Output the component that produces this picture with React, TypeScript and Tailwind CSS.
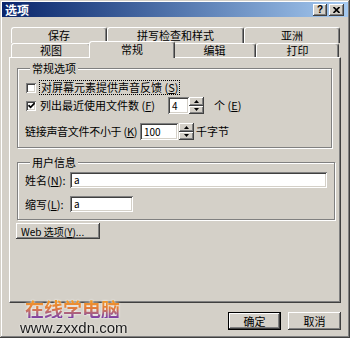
import React from 'react';

const raised =
  'shadow-[inset_-1px_-1px_#404040,inset_1px_1px_#fff,inset_-2px_-2px_#808080,inset_2px_2px_#d4d0c8]';
const sunken =
  'shadow-[inset_1px_1px_#808080,inset_-1px_-1px_#fff,inset_2px_2px_#404040,inset_-2px_-2px_#d4d0c8]';

const Check: React.FC<{ checked?: boolean }> = ({ checked }) => (
  <span
    className={`w-[10px] h-[10px] bg-white flex items-center justify-center shrink-0 ${sunken}`}
  >
    {checked && (
      <svg width="7" height="7" viewBox="0 0 7 7">
        <path d="M0.5 3.2 L2.6 5.3 L6.6 1.2" stroke="#000" strokeWidth="1.7" fill="none" />
      </svg>
    )}
  </span>
);

const Spin: React.FC = () => (
  <div className="flex flex-col w-[15px] h-[17px] shrink-0">
    <div className={`flex-1 bg-[#d4d0c8] flex items-center justify-center ${raised}`}>
      <svg width="5" height="3" viewBox="0 0 5 3">
        <path d="M0 3 L2.5 0 L5 3 Z" fill="#000" />
      </svg>
    </div>
    <div className={`flex-1 bg-[#d4d0c8] flex items-center justify-center ${raised}`}>
      <svg width="5" height="3" viewBox="0 0 5 3">
        <path d="M0 0 L5 0 L2.5 3 Z" fill="#000" />
      </svg>
    </div>
  </div>
);

const BackTab: React.FC<{ label: string; w: string }> = ({ label, w }) => (
  <div
    className={`${w} h-[16px] border-t border-l border-white border-r border-r-[#404040] rounded-t-[3px] shadow-[inset_-1px_0_#808080] flex items-center justify-center`}
  >
    {label}
  </div>
);

const FrontTab: React.FC<{ label: string; w: string }> = ({ label, w }) => (
  <div
    className={`${w} h-[14px] border-t border-l border-white border-r border-r-[#404040] rounded-t-[3px] shadow-[inset_-1px_0_#808080] flex items-center justify-center bg-[#d4d0c8]`}
  >
    {label}
  </div>
);

const Field: React.FC<{ value: string; w: string; h?: string }> = ({ value, w, h = 'h-[17px]' }) => (
  <div className={`${w} ${h} bg-white ${sunken} flex items-center pl-[4px] text-[10px] leading-none shrink-0`}>
    {value}
  </div>
);

const App: React.FC = () => {
  return (
    <div
      className={`relative w-[350px] h-[338px] bg-[#d4d0c8] text-black text-[11px] leading-[13px] font-['Noto_Sans_CJK_SC','Liberation_Sans',sans-serif] overflow-hidden shadow-[inset_-1px_-1px_#404040,inset_1px_1px_#d4d0c8,inset_-2px_-2px_#808080,inset_2px_2px_#fff]`}
    >
      {/* title bar */}
      <div className="mx-[2px] mt-[2px] h-[15px] bg-gradient-to-r from-[#0a246a] to-[#a6caf0] flex items-center justify-between pl-[3px] pr-[4px]">
        <span className="text-white font-bold text-[12px] leading-[15px]">选项</span>
        <div className="flex gap-[2px]">
          <div className={`w-[14px] h-[12px] bg-[#d4d0c8] ${raised} flex items-center justify-center text-[10px] font-bold leading-none font-['Liberation_Sans',sans-serif]`}>
            ?
          </div>
          <div className={`w-[15px] h-[12px] bg-[#d4d0c8] ${raised} flex items-center justify-center`}>
            <svg width="7" height="6" viewBox="0 0 7 6">
              <path d="M0.5 0 L6.5 6 M6.5 0 L0.5 6" stroke="#000" strokeWidth="1.6" />
            </svg>
          </div>
        </div>
      </div>

      {/* tabs */}
      <div className="mt-[10px] ml-[11px] w-[329px]">
        <div className="flex">
          <BackTab label="保存" w="w-[96px]" />
          <BackTab label="拼写检查和样式" w="w-[137px]" />
          <BackTab label="亚洲" w="w-[96px]" />
        </div>
        <div className="flex items-end h-[14px]">
          <FrontTab label="视图" w="w-[80px]" />
          <div className="relative z-10 w-[86px] -mx-[2px] h-[17px] -mb-px pb-[2px] border-t border-l border-white border-r border-r-[#404040] rounded-t-[3px] shadow-[inset_-1px_0_#808080] flex items-center justify-center bg-[#d4d0c8]">
            常规
          </div>
          <FrontTab label="编辑" w="w-[83px]" />
          <FrontTab label="打印" w="w-[83px]" />
        </div>
      </div>

      {/* tab page */}
      <div className="mx-[9px] h-[246px] border-t border-l border-white border-r border-b border-r-[#404040] border-b-[#404040] shadow-[inset_-1px_-1px_#808080] pl-[7px] pr-[8px] pt-[4px]">
        <fieldset className="border border-[#808080] shadow-[inset_1px_1px_#fff,1px_1px_#fff] pt-[7px] pb-[7px] px-[7px]">
          <legend className="ml-[5px] px-[2px] leading-[12px] bg-[#d4d0c8]">常规选项</legend>

          <div className="flex items-center h-[13px] pl-[1px]">
            <Check />
            <span className="ml-[4px] outline outline-1 outline-dotted outline-black px-[1px] whitespace-nowrap">
              对屏幕元素提供声音反馈 (<u>S</u>)
            </span>
          </div>

          <div className="flex items-center h-[17px] mt-[3px] pl-[1px]">
            <Check checked />
            <span className="ml-[4px] w-[128px] shrink-0 whitespace-nowrap">
              列出最近使用文件数 (<u>F</u>)
            </span>
            <Field value="4" w="w-[21px]" />
            <Spin />
            <span className="ml-[10px] whitespace-nowrap">
              个 (<u>E</u>)
            </span>
          </div>

          <div className="flex items-center h-[17px] mt-[9px]">
            <span className="w-[115px] shrink-0 whitespace-nowrap tracking-[-0.3px]">
              链接声音文件不小于 (<u>K</u>)
            </span>
            <Field value="100" w="w-[38px]" />
            <div className="ml-[1px]">
              <Spin />
            </div>
            <span className="ml-[2px] whitespace-nowrap">千字节</span>
          </div>
        </fieldset>

        <fieldset className="mt-[8px] border border-[#808080] shadow-[inset_1px_1px_#fff,1px_1px_#fff] pt-[4px] pb-[7px] px-[7px]">
          <legend className="ml-[5px] px-[2px] leading-[12px] bg-[#d4d0c8]">用户信息</legend>
          <div className="flex items-center h-[16px]">
            <span className="w-[45px] shrink-0 whitespace-nowrap">
              姓名(<u>N</u>):
            </span>
            <Field value="a" w="w-[257px]" h="h-[16px]" />
          </div>
          <div className="flex items-center h-[16px] mt-[8px]">
            <span className="w-[45px] shrink-0 whitespace-nowrap">
              缩写(<u>L</u>):
            </span>
            <Field value="a" w="w-[63px]" h="h-[16px]" />
          </div>
        </fieldset>

        <div
          className={`mt-[3px] -ml-px w-[84px] h-[16px] bg-[#d4d0c8] ${raised} flex items-center pl-[5px] text-[10px] whitespace-nowrap`}
        >
          Web 选项(<u>Y</u>)...
        </div>
      </div>

      {/* dialog buttons */}
      <div className="flex justify-end gap-[7px] pr-[9px] mt-[9px]">
        <div className="w-[53px] h-[18px] border border-black">
          <div className={`w-full h-full bg-[#d4d0c8] ${raised} flex items-center justify-center`}>确定</div>
        </div>
        <div className={`w-[53px] h-[18px] bg-[#d4d0c8] ${raised} flex items-center justify-center`}>取消</div>
      </div>

      {/* watermark */}
      <div className="absolute left-[20px] top-[299px] flex flex-col pointer-events-none">
        <span className="ml-[5px] text-[19px] leading-[19px] font-bold bg-gradient-to-b from-[#f7a21e] via-[#e07a3a] to-[#7a3aa8] bg-clip-text text-transparent drop-shadow-[0_0_1px_#fff]">
          在线学电脑
        </span>
        <span className="mt-[3px] text-[15px] leading-[13px] text-[#1a1a1a] font-['Liberation_Sans',sans-serif] drop-shadow-[0_0_1px_#fff]">
          www.zxxdn.com
        </span>
      </div>
    </div>
  );
};

export default App;
